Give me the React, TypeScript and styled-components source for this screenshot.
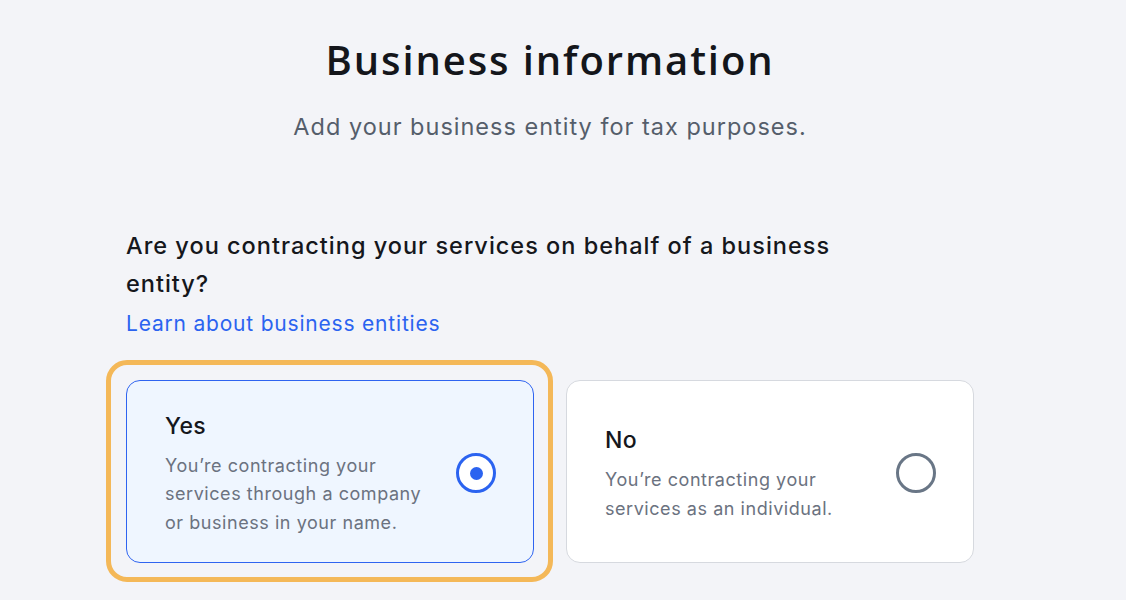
import React from "react";
import styled, { createGlobalStyle } from "styled-components";

const GlobalStyle = createGlobalStyle`
  html, body { margin: 0; padding: 0; background: #f3f4f8; }
  body { font-family: Inter, "Noto Sans", sans-serif; -webkit-font-smoothing: antialiased; }
`;

const Page = styled.main`
  width: 848px;
  margin-left: 126px;
  padding: 34px 0 40px;
  display: flex;
  flex-direction: column;
`;

const Header = styled.header`
  display: flex;
  flex-direction: column;
  align-items: center;
  gap: 25px;
`;

const Title = styled.h1`
  margin: 0;
  font-family: "Open Sans", "Noto Sans", sans-serif;
  font-weight: 600;
  font-size: 40px;
  line-height: 52px;
  color: #14161b;
  letter-spacing: 1.9px;
`;

const Subtitle = styled.p`
  margin: 0;
  font-size: 23.5px;
  line-height: 32px;
  color: #555e6b;
  letter-spacing: 1px;
`;

const Question = styled.h2`
  margin: 84px 0 0;
  max-width: 740px;
  font-size: 23.5px;
  line-height: 38px;
  font-weight: 500;
  color: #15171c;
  letter-spacing: 1px;
`;

const LearnLink = styled.a`
  margin-top: 7px;
  align-self: flex-start;
  font-size: 21px;
  line-height: 28px;
  color: #2b63f0;
  text-decoration: none;
  letter-spacing: 0.8px;
`;

const Options = styled.div`
  margin-top: 42px;
  display: grid;
  grid-template-columns: 408px 408px;
  gap: 32px;
`;

const Card = styled.label<{ $selected: boolean; $focused?: boolean }>`
  position: relative;
  box-sizing: border-box;
  min-height: 183px;
  display: flex;
  align-items: center;
  gap: 24px;
  padding: 5px 37px 0 38px;
  border-radius: 14px;
  border: 1px solid ${(p) => (p.$selected ? "#2f64f0" : "#d6d9df")};
  background: ${(p) => (p.$selected ? "#eff6ff" : "#ffffff")};
  cursor: pointer;

  &::after {
    content: "";
    display: ${(p) => (p.$focused ? "block" : "none")};
    position: absolute;
    inset: -21px -20px -20px -21px;
    border: 5px solid #f4b858;
    border-radius: 21px;
    pointer-events: none;
  }
`;

const CardText = styled.div`
  flex: 1;
  display: flex;
  flex-direction: column;
  gap: 11px;
`;

const CardTitle = styled.span`
  font-size: 23px;
  line-height: 30px;
  font-weight: 500;
  color: #15171c;
  letter-spacing: 0.4px;
`;

const CardDesc = styled.span`
  font-size: 18px;
  line-height: 28.5px;
  color: #6b7280;
  letter-spacing: 0.55px;
`;

const Radio = styled.span<{ $checked: boolean }>`
  flex: none;
  box-sizing: border-box;
  width: 40px;
  height: 40px;
  margin-top: -2px;
  border-radius: 50%;
  border: 3px solid ${(p) => (p.$checked ? "#2b63f0" : "#697686")};
  background: #ffffff;
  display: flex;
  align-items: center;
  justify-content: center;

  &::before {
    content: "";
    display: ${(p) => (p.$checked ? "block" : "none")};
    width: 13px;
    height: 13px;
    border-radius: 50%;
    background: #2b63f0;
  }
`;

const options = [
  {
    title: "Yes",
    desc: "You’re contracting your services through a company or business in your name.",
    selected: true,
  },
  {
    title: "No",
    desc: "You’re contracting your services as an individual.",
    selected: false,
  },
];

export default function App() {
  return (
    <>
      <GlobalStyle />
      <Page>
        <Header>
          <Title>Business information</Title>
          <Subtitle>Add your business entity for tax purposes.</Subtitle>
        </Header>
        <Question>
          Are you contracting your services on behalf of a business entity?
        </Question>
        <LearnLink href="#">Learn about business entities</LearnLink>
        <Options>
          {options.map((o) => (
            <Card key={o.title} $selected={o.selected} $focused={o.selected}>
              <CardText>
                <CardTitle>{o.title}</CardTitle>
                <CardDesc>{o.desc}</CardDesc>
              </CardText>
              <Radio $checked={o.selected} />
            </Card>
          ))}
        </Options>
      </Page>
    </>
  );
}
